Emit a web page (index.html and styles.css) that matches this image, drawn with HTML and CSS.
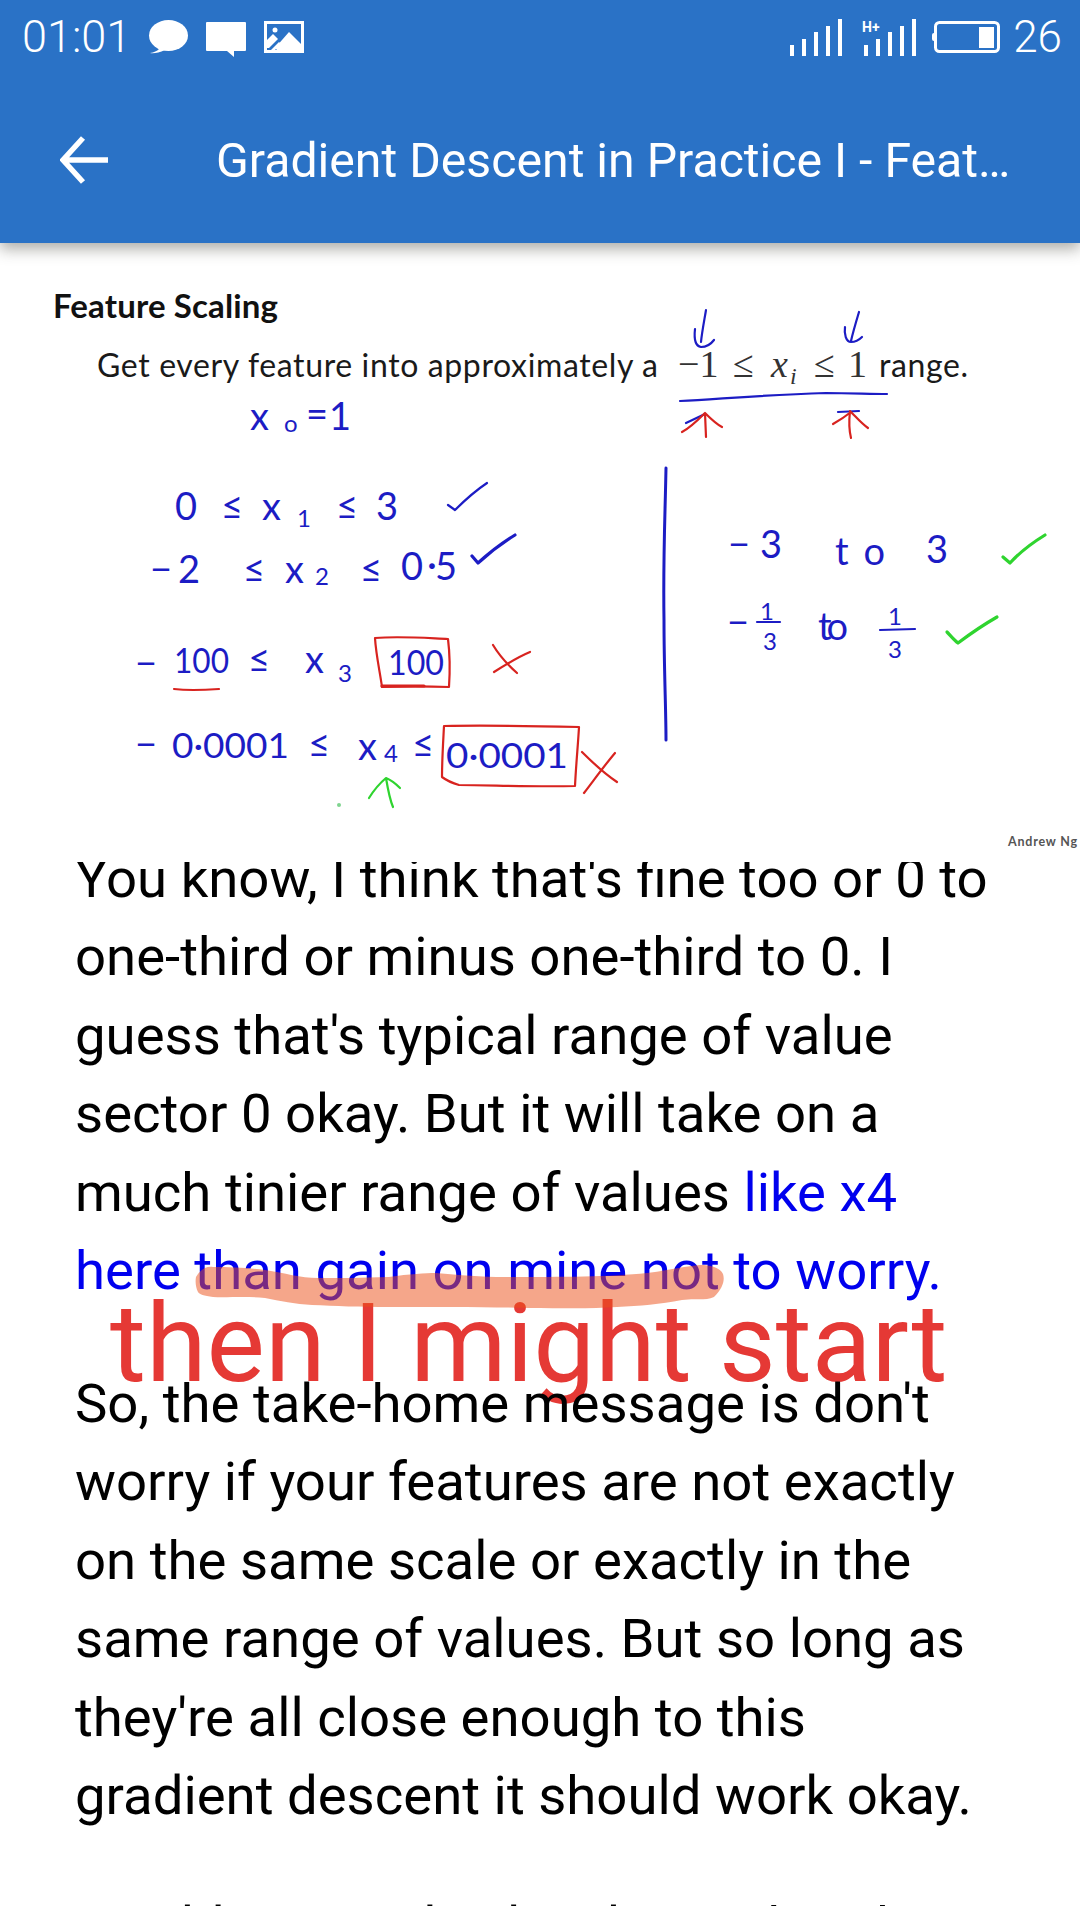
FILE: index.html
```html
<!DOCTYPE html>
<html lang="en">
<head>
<meta charset="utf-8">
<title>Gradient Descent in Practice I - Feature Scaling</title>
<link rel="stylesheet" href="styles.css">
</head>
<body>
<div class="screen">
  <header class="appbar">
    <div class="status">
      <div class="status-left">
        <span class="time">01:01</span>
        <svg class="ic ic-bubble" viewBox="0 0 40 34"><ellipse cx="20.500" cy="15.500" rx="19.500" ry="15.500"/><path d="M9 25 L11 29 Q8 32 2 33 Q8 34 17 30 Z"/></svg>
        <svg class="ic ic-comment" viewBox="0 0 40 36"><path d="M1 0 H39 a1 1 0 0 1 1 1 V28 a1 1 0 0 1 -1 1 H28 V35 L21 29 H1 a1 1 0 0 1 -1 -1 V1 a1 1 0 0 1 1 -1 Z"/></svg>
        <svg class="ic ic-image" viewBox="0 0 40 32"><rect width="40" height="32"/><rect class="cut" x="3" y="3" width="34" height="26"/><circle cx="11" cy="9" r="2.500"/><path d="M25 11 L37 23 V29 H13 L11 27 Z"/><path d="M3 19 L9 13 L14 18 L5 27 H3 Z"/><path d="M7 29 L15 21 L17 23 L11 29 Z"/></svg>
      </div>
      <div class="status-right">
        <svg class="ic ic-signal" viewBox="0 0 52 37"><rect x="0" y="26" width="4" height="11"/><rect x="12" y="20" width="4" height="17"/><rect x="24" y="13" width="4" height="24"/><rect x="36" y="7" width="4" height="30"/><rect x="48" y="0" width="4" height="37"/></svg>
        <svg class="ic ic-signal2" viewBox="0 0 54 37"><text class="hplus" x="0" y="13">H+</text><rect x="2" y="26" width="4" height="11"/><rect x="14" y="20" width="4" height="17"/><rect x="26" y="13" width="4" height="24"/><rect x="38" y="7" width="4" height="30"/><rect x="50" y="0" width="4" height="37"/></svg>
        <svg class="ic ic-battery" viewBox="0 0 68 32"><rect x="0" y="12" width="4" height="8" rx="2"/><rect class="outline" x="3.500" y="1.500" width="63" height="29" rx="4"/><rect x="47" y="6" width="15" height="21"/></svg>
        <span class="level">26</span>
      </div>
    </div>
    <div class="toolbar">
      <svg class="back" viewBox="0 0 48 48"><path d="M23 2 L3 24 L23 46 M3 24 H48"/></svg>
      <h1 class="title">Gradient Descent in Practice I - Feat…</h1>
    </div>
  </header>

  <svg class="slide" viewBox="0 243 1080 619">
    <text class="s-head" x="53" y="318" textLength="225">Feature Scaling</text>
    <text class="s-line" x="97" y="377" textLength="561">Get every feature into approximately a</text>
    <text class="s-math" x="678" y="377">−1</text>
    <text class="s-math" x="733" y="377">≤</text>
    <text class="s-math s-it" x="771" y="377">x</text>
    <text class="s-sub s-it" x="790" y="384">i</text>
    <text class="s-math" x="814" y="377">≤</text>
    <text class="s-math" x="848" y="377">1</text>
    <text class="s-line" x="879" y="377" textLength="89">range.</text>
    <text class="s-credit" x="1008" y="846" textLength="69">Andrew Ng</text>

    <path class="ink blue" d="M680 401 C720 399 760 395 826 393 C850 393 870 394 887 394"/>
    <path class="ink blue" d="M706 310 C704 322 702 332 701 342 M695 329 C694 338 695 346 701 347 C706 347 711 344 714 340"/>
    <path class="ink blue" d="M859 312 C856 322 853 332 851 341 M845 327 C844 334 846 342 851 342 C855 342 859 340 862 337"/>
    <path class="ink blue" d="M686 423 L705 414"/>
    <path class="ink blue" d="M838 412 L859 411"/>
    <path class="ink red" d="M705 413 L706 437 M682 432 C690 428 698 420 705 413 C710 418 716 424 722 427"/>
    <path class="ink red" d="M850 411 C849 420 849 430 851 438 M833 424 C840 420 846 416 851 412 C857 418 862 424 868 428"/>
    <path class="ink blue line3" d="M666 468 C665 520 663 560 664 620 C664 670 666 710 666 740"/>

    <text class="hw" x="250" y="430">x</text>
    <text class="hw-s" x="284" y="432">o</text>
    <text class="hw" x="306" y="428">=</text>
    <text class="hw" x="329" y="430">1</text>

    <text class="hw" x="175" y="520">0</text>
    <text class="hw" x="221" y="520">≤</text>
    <text class="hw" x="262" y="520">x</text>
    <text class="hw-s" x="297" y="527">1</text>
    <text class="hw" x="336" y="520">≤</text>
    <text class="hw" x="376" y="520">3</text>
    <path class="ink blue" d="M448 505 L455 510 C465 500 475 491 487 483"/>

    <text class="hw" x="150" y="583">−</text>
    <text class="hw" x="178" y="583">2</text>
    <text class="hw" x="243" y="583">≤</text>
    <text class="hw" x="285" y="583">x</text>
    <text class="hw-s" x="315" y="585">2</text>
    <text class="hw" x="360" y="583">≤</text>
    <text class="hw" x="401" y="580">0</text>
    <text class="hw" x="427" y="578">·</text>
    <text class="hw" x="435" y="580">5</text>
    <path class="ink blue thick" d="M472 556 L478 563 C490 552 502 543 515 535"/>

    <text class="hw" x="728" y="558">−</text>
    <text class="hw" x="760" y="558">3</text>
    <text class="hw" x="835" y="565" textLength="50">to</text>
    <text class="hw" x="926" y="563">3</text>
    <path class="ink green thick" d="M1003 557 L1010 563 C1020 552 1032 543 1045 535"/>

    <text class="hw" x="727" y="636">−</text>
    <text class="hw-s" x="760" y="620">1</text>
    <path class="ink blue" d="M757 622 H780"/>
    <text class="hw-s" x="763" y="650">3</text>
    <text class="hw" x="818" y="640" textLength="30">to</text>
    <text class="hw-s" x="888" y="625">1</text>
    <path class="ink blue" d="M880 630 L915 629"/>
    <text class="hw-s" x="888" y="658">3</text>
    <path class="ink green thick" d="M947 632 C951 636 954 640 958 643 C970 634 983 625 997 617"/>

    <text class="hw" x="135" y="677">−</text>
    <text class="hw-n" x="174" y="673" textLength="55" lengthAdjust="spacingAndGlyphs">100</text>
    <text class="hw" x="248" y="673">≤</text>
    <text class="hw" x="305" y="673">x</text>
    <text class="hw-s" x="338" y="682">3</text>
    <text class="hw-n" x="388" y="675" textLength="56" lengthAdjust="spacingAndGlyphs">100</text>
    <path class="ink red" d="M375 638 C400 636 425 638 448 639 C450 655 450 672 449 687 C425 686 405 686 382 687 C380 672 376 655 375 638 Z"/>
    <path class="ink red thick" d="M382 686 H424"/>
    <path class="ink red" d="M174 689 C190 691 205 690 219 689"/>
    <path class="ink red" d="M493 645 C499 655 508 665 517 673 M494 672 C505 665 518 657 530 652"/>

    <text class="hw" x="135" y="758">−</text>
    <text class="hw-n" x="172" y="758" textLength="117" lengthAdjust="spacingAndGlyphs">0·0001</text>
    <text class="hw" x="308" y="758">≤</text>
    <text class="hw" x="358" y="760">x</text>
    <text class="hw-s" x="384" y="762">4</text>
    <text class="hw" x="412" y="758">≤</text>
    <text class="hw-n" x="446" y="768" textLength="122" lengthAdjust="spacingAndGlyphs">0·0001</text>
    <path class="ink red" d="M444 726 C490 725 535 726 579 727 C578 745 576 765 575 786 C530 787 490 785 459 785 C452 783 446 780 442 777 C442 760 443 745 444 726 Z"/>
    <path class="ink red" d="M582 752 C592 762 605 774 617 782 M584 793 C594 780 604 766 615 753"/>
    <path class="ink green" d="M386 778 C388 790 390 800 393 807 M369 798 C374 790 380 783 386 778 C391 780 396 784 400 788"/>
    <circle class="dot" cx="339" cy="805" r="2"/>
  </svg>

  <main class="article">
    <p class="para first">You know, I think that's fine too or 0 to<br>one-third or minus one-third to 0. I<br>guess that's typical range of value<br>sector 0 okay. But it will take on a<br>much tinier range of values <a class="link">like x4<br>here than gain on mine not to worry.</a></p>
    <p class="para">So, the take-home message is don't<br>worry if your features are not exactly<br>on the same scale or exactly in the<br>same range of values. But so long as<br>they're all close enough to this<br>gradient descent it should work okay.</p>
    <p class="para next">In addition to dividing by so that the</p>
  </main>

  <svg class="stroke" viewBox="0 0 540 52"><path d="M6 17 C10 10 16 6 23 7 C40 7 60 8 75 10 C95 13 110 18 128 18 C150 18 170 18 199 17 C220 14 235 13 246 13 C270 15 290 17 316 17 C370 17 420 17 457 13 C475 11 495 6 510 5 C522 5 530 8 533 14 C535 20 533 28 524 37 C515 41 505 38 492 40 C470 44 450 46 427 47 C400 49 370 48 339 48 C300 47 250 47 199 47 C170 47 145 46 122 45 C105 44 90 41 75 38 C55 36 35 38 23 37 C14 36 9 34 8 32 C6 28 5 22 6 17 Z"/></svg>
  <div class="caption">then I might start</div>
</div>
</body>
</html>
```
FILE: styles.css
```css
* { box-sizing: border-box; }
html, body { margin: 0; padding: 0; background: #fff; }
.screen {
  position: relative;
  width: 1080px;
  height: 1920px;
  overflow: hidden;
  font-family: Roboto, "Liberation Sans", sans-serif;
  background: #fff;
}
.appbar {
  position: relative;
  z-index: 3;
  height: 243px;
  background: #2a72c6;
  color: #fff;
  box-shadow: 0 6px 14px rgba(60, 60, 50, 0.42);
}
.status {
  height: 74px;
  display: flex;
  align-items: center;
  justify-content: space-between;
  padding: 0 18px 0 22px;
}
.status-left, .status-right { display: flex; align-items: center; }
.time { font-size: 45px; line-height: 74px; font-weight: 300; }
.level { font-size: 44px; line-height: 74px; font-weight: 300; margin-left: 13px; }
.ic { display: block; fill: #fff; }
.ic-bubble { width: 40px; height: 34px; margin-left: 17px; }
.ic-comment { width: 40px; height: 36px; margin-left: 18px; margin-top: 5px; }
.ic-image { width: 40px; height: 32px; margin-left: 18px; }
.ic-image .cut { fill: #2a72c6; }
.ic-signal { width: 52px; height: 37px; margin-top: 1px; }
.ic-signal2 { width: 54px; height: 37px; margin-left: 20px; margin-top: 1px; }
.hplus { font: 700 14px Roboto, sans-serif; fill: #fff; }
.ic-battery { width: 68px; height: 32px; margin-left: 16px; }
.outline { fill: none; stroke: #fff; stroke-width: 3; }
.toolbar {
  height: 169px;
  display: flex;
  align-items: center;
  padding: 2px 0 0 60px;
}
.back {
  width: 48px;
  height: 48px;
  fill: none;
  stroke: #fff;
  stroke-width: 5.500;
  flex: none;
}
.title {
  margin: 2px 0 0 108px;
  font-size: 48.200px;
  font-weight: 400;
  white-space: nowrap;
}
.slide { display: block; width: 1080px; height: 619px; }
.s-head { font: 700 33px Lato, "Open Sans", sans-serif; fill: #111; }
.s-line { font: 400 32px Lato, "Open Sans", sans-serif; fill: #1a1a1a; }
.s-math { font: 400 38px "Liberation Serif", serif; fill: #333; }
.s-it { font-style: italic; }
.s-sub { font: italic 400 24px "Liberation Serif", serif; fill: #333; }
.s-credit { font: 700 12.500px Lato, "Open Sans", sans-serif; fill: #555; }
.hw { font: 400 38px Lato, "Open Sans", sans-serif; fill: #1c1cc4; }
.hw-n { font: 400 34px Lato, "Open Sans", sans-serif; fill: #1c1cc4; }
.hw-s { font: 400 24px Lato, "Open Sans", sans-serif; fill: #1c1cc4; }
.ink { fill: none; stroke-width: 2.200; stroke-linecap: round; stroke-linejoin: round; }
.blue { stroke: #1c1cc4; }
.red { stroke: #d8231f; }
.green { stroke: #2fd42f; }
.thick { stroke-width: 3.200; }
.line3 { stroke-width: 3; }
.dot { fill: #7fd48f; }
.article {
  position: relative;
  z-index: 2;
  height: 1044px;
  overflow: hidden;
  padding: 0 75px;
}
.para {
  margin: 0 0 54.600px;
  font-size: 54.500px;
  line-height: 78.400px;
  color: #000;
  white-space: nowrap;
}
.first { margin-top: -23px; }
.next { margin-top: -2.300px; }
.link { color: #0000ee; }
.stroke {
  position: absolute;
  z-index: 2;
  left: 190px;
  top: 1260px;
  width: 540px;
  height: 52px;
  fill: rgba(235, 80, 25, 0.51);
}
.caption {
  position: absolute;
  z-index: 1;
  left: 110px;
  top: 1279px;
  font-size: 110px;
  line-height: 130px;
  color: #e53935;
  white-space: nowrap;
}
```
